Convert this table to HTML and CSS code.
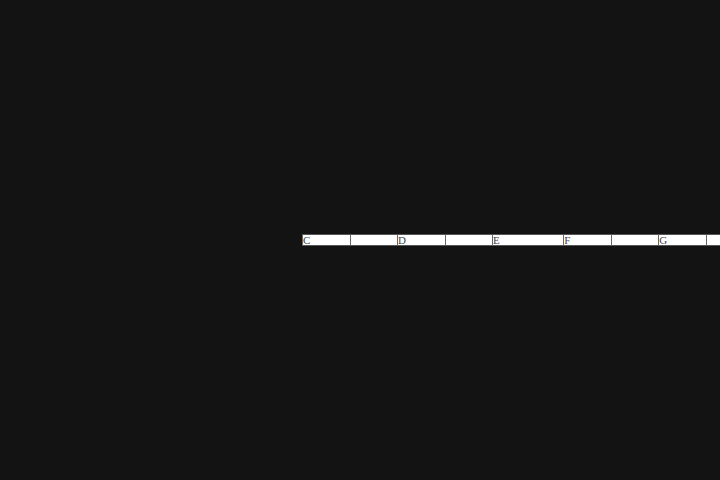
FILE: index.html
```html
<!DOCTYPE html>
<html>
<head>
<meta charset="utf-8">
<link rel="stylesheet" href="styles.css">
</head>
<body>
<div class="stage">
  <div class="keys">
    <div class="key">C</div>
    <div class="key"></div>
    <div class="key">D</div>
    <div class="key"></div>
    <div class="key wide">E</div>
    <div class="key">F</div>
    <div class="key"></div>
    <div class="key">G</div>
    <div class="key"></div>
  </div>
</div>
</body>
</html>
```
FILE: styles.css
```css
html, body {
  margin: 0;
  padding: 0;
  background: #131313;
  width: 720px;
  height: 480px;
  overflow: hidden;
}
.stage {
  padding: 234px 0 0 302px;
  display: flex;
  overflow: hidden;
}
.keys {
  display: flex;
  flex: none;
}
.key {
  flex: none;
  width: 47.5px;
  height: 12px;
  box-sizing: border-box;
  background: #ffffff;
  border-top: 1px solid #555;
  border-bottom: 1px solid #555;
  border-left: 1px solid #666;
  font-family: "Liberation Serif", serif;
  font-size: 11px;
  line-height: 11px;
  color: #444;
  overflow: hidden;
}
.key.wide {
  width: 71.25px;
}
```
